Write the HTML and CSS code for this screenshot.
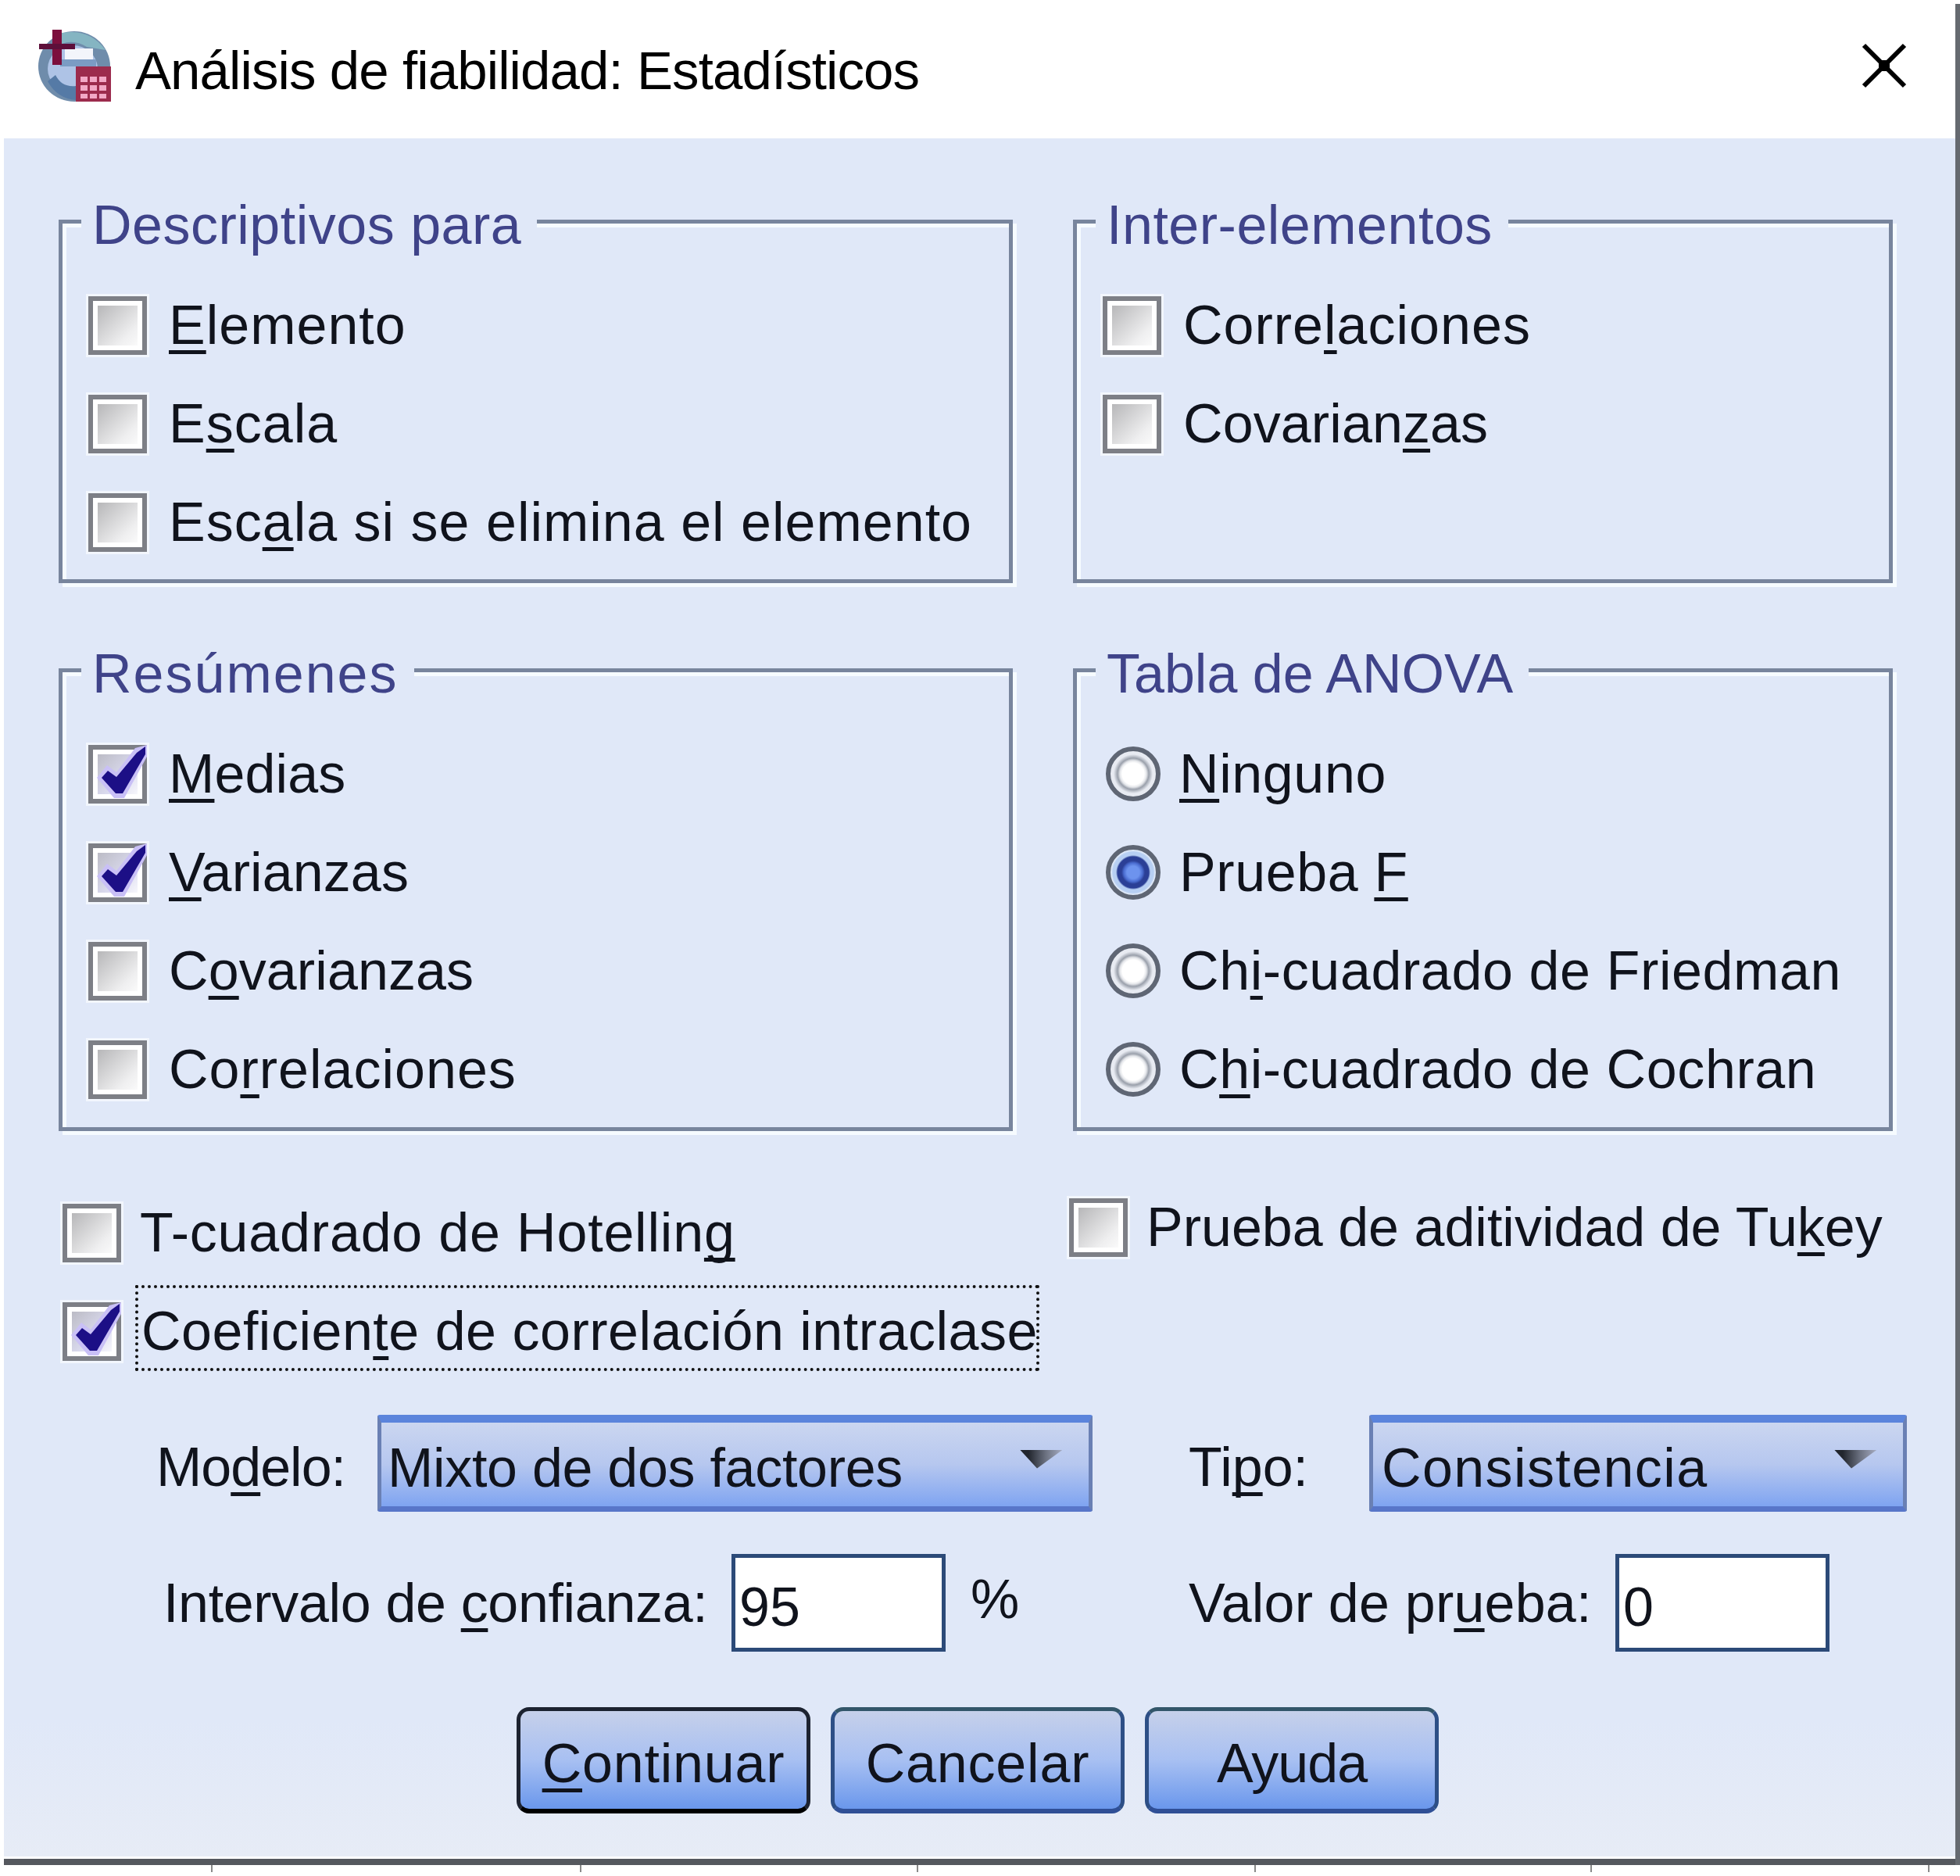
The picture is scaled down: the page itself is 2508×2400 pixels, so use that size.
FILE: index.html

```html
<!DOCTYPE html>
<html lang="es">
    <head>
        <meta charset="UTF-8">
        <meta name="viewport" content="width=device-width, initial-scale=1.0">
        <title>Análisis de fiabilidad: Estadísticos</title>
        <link rel="stylesheet" href="styles.css">
    </head>
    <body>
        <svg class="defs" width="0" height="0">
            <symbol id="tick" viewBox="0 0 75 75">
                <polygon points="11,42 24,26 36,35 60,4 75,0 75,15 46,68 33,68" fill="#c9c0f6"/>
                <polygon points="17,42 25,33 36,41 62,10 73,2 73,12 44,62 35,62" fill="#1c0f86"/>
            </symbol>
        </svg>

        <div class="window">
            <div class="titlebar">
                <svg class="app-icon" viewBox="0 0 94 92">
                    <ellipse cx="46" cy="47" rx="46" ry="45" fill="#6f8cab"/>
                    <path d="M30 4 Q66 -2 86 26 L62 22 Q46 12 30 18 Z" fill="#85b5c2"/>
                    <ellipse cx="44" cy="50" rx="32" ry="30" fill="#aec3e6"/>
                    <rect x="34" y="24" width="36" height="14" fill="#f3f5fb"/>
                    <rect x="28" y="38" width="46" height="9" fill="#7b9cc4"/>
                    <path d="M12 66 Q24 88 48 90 L48 72 Q30 74 22 58 Z" fill="#557aa6"/>
                    <rect x="18" y="0" width="12" height="45" fill="#7c0f3d"/>
                    <rect x="1" y="18" width="46" height="7" fill="#5d0f3a"/>
                    <rect x="48" y="47" width="45" height="45" fill="#9c2b4d"/>
                    <g fill="#f2a8c6">
                        <rect x="54" y="60" width="9" height="7"/>
                        <rect x="66" y="60" width="9" height="7"/>
                        <rect x="78" y="60" width="9" height="7"/>
                        <rect x="54" y="71" width="9" height="7"/>
                        <rect x="66" y="71" width="9" height="7"/>
                        <rect x="78" y="71" width="9" height="7"/>
                        <rect x="54" y="82" width="9" height="6"/>
                        <rect x="66" y="82" width="9" height="6"/>
                        <rect x="78" y="82" width="9" height="6"/>
                    </g>
                </svg>
                <span class="title">Análisis de fiabilidad: Estadísticos</span>
                <svg class="close" viewBox="0 0 58 58">
                    <path d="M3 3 L55 55 M55 3 L3 55" stroke="#000" stroke-width="6" fill="none"/>
                    <rect x="22" y="22" width="14" height="14"/>
                </svg>
            </div>

            <div class="panel">
                <div class="groups">
                    <fieldset class="group group-short">
                        <legend>Descriptivos para</legend>
                        <div class="row"><span class="check"></span><span><u>E</u>lemento</span></div>
                        <div class="row"><span class="check"></span><span>E<u>s</u>cala</span></div>
                        <div class="row"><span class="check"></span><span>Esc<u>a</u>la si se elimina el elemento</span></div>
                    </fieldset>
                    <fieldset class="group group-short">
                        <legend>Inter-elementos</legend>
                        <div class="row"><span class="check"></span><span>Corre<u>l</u>aciones</span></div>
                        <div class="row row-tight"><span class="check"></span><span>Covarian<u>z</u>as</span></div>
                    </fieldset>
                    <fieldset class="group group-tall">
                        <legend class="legend-wide">Resúmenes</legend>
                        <div class="row row-tight"><span class="check checked"><svg><use href="#tick"/></svg></span><span><u>M</u>edias</span></div>
                        <div class="row row-tight"><span class="check checked"><svg><use href="#tick"/></svg></span><span><u>V</u>arianzas</span></div>
                        <div class="row row-tight"><span class="check"></span><span>C<u>o</u>varianzas</span></div>
                        <div class="row"><span class="check"></span><span>Co<u>r</u>relaciones</span></div>
                    </fieldset>
                    <fieldset class="group group-tall">
                        <legend class="legend-narrow">Tabla de ANOVA</legend>
                        <div class="row row-radio"><span class="radio"></span><span><u>N</u>inguno</span></div>
                        <div class="row row-radio"><span class="radio selected"></span><span>Prueba <u>F</u></span></div>
                        <div class="row row-radio"><span class="radio"></span><span>Ch<u>i</u>-cuadrado de Friedman</span></div>
                        <div class="row row-radio"><span class="radio"></span><span>C<u>h</u>i-cuadrado de Cochran</span></div>
                    </fieldset>
                </div>

                <div class="extras">
                    <div class="extras-left">
                        <div class="row row-plain"><span class="check"></span><span>T-cuadrado de Hotellin<u>g</u></span></div>
                        <div class="row row-focus"><span class="check checked"><svg><use href="#tick"/></svg></span><span class="focus">Coeficien<u>t</u>e de correlación intraclase</span></div>
                    </div>
                    <div class="row row-tukey"><span class="check"></span><span>Prueba de aditividad de Tu<u>k</u>ey</span></div>
                </div>

                <div class="form">
                    <div class="cell">
                        <span class="lbl lbl-modelo">Mo<u>d</u>elo:</span>
                        <div class="combo combo-modelo">Mixto de dos factores<span class="arrow"></span></div>
                    </div>
                    <div class="cell">
                        <span class="lbl lbl-tipo">Ti<u>p</u>o:</span>
                        <div class="combo combo-tipo">Consistencia<span class="arrow"></span></div>
                    </div>
                    <div class="cell cell-indent">
                        <span class="lbl lbl-intervalo">Intervalo de <u>c</u>onfianza:</span>
                        <input class="field" type="text" value="95">
                        <span class="percent">%</span>
                    </div>
                    <div class="cell">
                        <span class="lbl lbl-valor">Valor de pr<u>u</u>eba:</span>
                        <input class="field" type="text" value="0">
                    </div>
                </div>

                <div class="buttons">
                    <button class="btn btn-default"><u>C</u>ontinuar</button>
                    <button class="btn">Cancelar</button>
                    <button class="btn btn-help">Ayuda</button>
                </div>
            </div>
        </div>

        <div class="ticks"><i></i><i></i><i></i><i></i><i></i><i></i></div>
    </body>
</html>
```

FILE: styles.css

```css
* {
    box-sizing: border-box;
}

body {
    margin: 0;
    width: 2508px;
    height: 2400px;
    overflow: hidden;
    background-color: #fff;
    font-family: "Liberation Sans", Arial, sans-serif;
    font-size: 70px;
    color: #10131c;
}

u {
    text-decoration-thickness: 5px;
    text-underline-offset: 8px;
    text-decoration-skip-ink: none;
}

.defs {
    display: block;
}

.window {
    display: flex;
    flex-direction: column;
    height: 2381px;
    margin-top: 5px;
    border-right: 6px solid #666a70;
}

/* title bar */
.titlebar {
    display: flex;
    align-items: center;
    height: 172px;
    padding: 0 62px 14px 49px;
    flex-shrink: 0;
}

.app-icon {
    width: 94px;
    height: 92px;
    margin-right: 30px;
}

.title {
    padding-top: 12px;
    font-size: 69px;
    letter-spacing: -0.9px;
    color: #000;
}

.close {
    width: 58px;
    height: 58px;
    margin-left: auto;
}

/* main panel */
.panel {
    flex: 1;
    margin-left: 5px;
    padding: 0 80px 0 70px;
    background: linear-gradient(#e0e8f8 92%, #e7ecf6);
    border-bottom: 8px solid #55585e;
    box-shadow: inset 0 -3px 0 #fff;
}

.groups {
    display: grid;
    grid-template-columns: 1221px 1049px;
    column-gap: 77px;
    row-gap: 71px;
    padding-top: 66px;
}

/* etched frame: light line inside top and left, outside right and bottom */
.group {
    margin: 0;
    min-width: 0;
    padding: 30px 0 0 33px;
    border: 5px solid #78859d;
    box-shadow: inset 5px 5px 0 #f6fbff, 5px 5px 0 #f6fbff;
}

.group-short {
    height: 503px;
}

.group-tall {
    height: 630px;
}

.group legend {
    margin-left: -9px;
    padding: 10px 20px 0 14px;
    line-height: 70px;
    letter-spacing: 0.5px;
    color: #3f4389;
    background-color: #e0e8f8;
}

.group .legend-wide {
    letter-spacing: 2px;
}

.group .legend-narrow {
    letter-spacing: 0;
}

.row {
    display: flex;
    align-items: center;
    height: 126px;
    gap: 28px;
    letter-spacing: 1px;
    white-space: nowrap;
}

.row-tight {
    letter-spacing: 0.1px;
}

.row-radio {
    gap: 24px;
    margin-left: 4px;
    letter-spacing: 0.6px;
}

.check {
    width: 75px;
    height: 75px;
    flex-shrink: 0;
    border: 6px solid #7d7f86;
    background: linear-gradient(135deg, #aeaeb0, #efeff0 70%, #fff) padding-box;
    box-shadow: inset 0 0 0 6px #fff, 0 0 0 3px #f2f6fd;
}

.check.checked {
    position: relative;
    background: linear-gradient(135deg, #b5b5bd, #dcdcf0 60%, #fff) padding-box;
}

.check svg {
    position: absolute;
    left: -6px;
    top: -6px;
    width: 75px;
    height: 75px;
}

.radio {
    width: 70px;
    height: 70px;
    flex-shrink: 0;
    border-radius: 50%;
    border: 6px solid #5f6674;
    background: radial-gradient(circle, #fff 0 14px, #e4e6ea 17px, #9aa0ab 20px, #e8ebf2 25px);
}

.radio.selected {
    background: radial-gradient(circle, #6d93ee 0 8px, #4a6cd0 12px, #2b3f96 15px 20px, #b7cff3 22px 26px, #dfe9f8 28px);
}

/* the two loose checkboxes under the groups */
.extras {
    display: grid;
    grid-template-columns: 1298px 1fr;
    padding-top: 67px;
}

.extras-left {
    padding-left: 5px;
}

.row-plain {
    gap: 24px;
    letter-spacing: 0.8px;
}

.row-focus {
    gap: 18px;
    letter-spacing: 0.5px;
}

.focus {
    display: flex;
    align-items: center;
    width: 1157px;
    height: 110px;
    margin-top: -8px;
    padding: 8px 0 0 4px;
    border: 4px dotted #111;
}

.row-tukey {
    align-self: start;
    gap: 24px;
    margin: -7px 0 0 -5px;
    letter-spacing: 0;
}

/* model row and value row */
.form {
    display: grid;
    grid-template-columns: 1326px 1fr;
    row-gap: 54px;
    padding: 44px 0 0 120px;
}

.cell {
    display: flex;
    align-items: center;
    white-space: nowrap;
}

.cell-indent {
    padding-left: 14px;
}

.lbl-modelo {
    width: 288px;
    padding: 10px 0 0 5px;
    letter-spacing: -1px;
}

.lbl-tipo {
    width: 231px;
    padding-top: 10px;
}

.lbl-intervalo {
    width: 727px;
    letter-spacing: -0.35px;
}

.lbl-valor {
    width: 546px;
    letter-spacing: 0.2px;
}

.combo {
    display: flex;
    align-items: center;
    height: 124px;
    padding: 8px 0 0 8px;
    border: 5px solid #6a80b4;
    border-top: 10px solid #5b84dc;
    border-bottom: 7px solid #5876c9;
    border-radius: 3px;
    background: linear-gradient(#cbd6f0, #b6c7ef 50%, #7fa4f1);
}

.combo-modelo {
    width: 915px;
    letter-spacing: -0.3px;
}

.combo-tipo {
    width: 688px;
    padding-left: 11px;
    letter-spacing: 1.4px;
}

.arrow {
    width: 55px;
    height: 24px;
    margin: -22px 33px 0 auto;
    background: linear-gradient(90deg, #22262e 20%, #6b7180 60%, #a8aec4);
    clip-path: polygon(0 0, 100% 0, 40% 100%);
}

.field {
    width: 274px;
    height: 125px;
    padding: 10px 0 0 5px;
    border: 5px solid #2c4a78;
    border-radius: 0;
    outline: none;
    background-color: #fff;
    font: inherit;
    color: #10131c;
}

.percent {
    margin: -10px 0 0 32px;
    letter-spacing: -2px;
}

/* bottom buttons */
.buttons {
    display: flex;
    gap: 26px;
    padding: 71px 0 0 586px;
}

.btn {
    width: 376px;
    height: 136px;
    padding: 8px 0 0;
    border: 5px solid #2d4f86;
    border-top-color: #33566a;
    border-bottom: 6px solid #2f4f96;
    border-radius: 16px;
    background: linear-gradient(#c6d0ea, #a8c0f2 50%, #6a97ec);
    font: inherit;
    letter-spacing: 0.8px;
    color: #10131c;
}

.btn-default {
    border-color: #1c2230;
    border-bottom-color: #000;
}

.btn-help {
    letter-spacing: -1px;
}

/* scrap of the page behind the dialog */
.ticks {
    display: grid;
    grid-template-columns: 472px 431px 432px 430px 432px 41px;
    height: 9px;
    margin-left: 270px;
}

.ticks i {
    border-left: 2px solid #8a8a8a;
}
```
